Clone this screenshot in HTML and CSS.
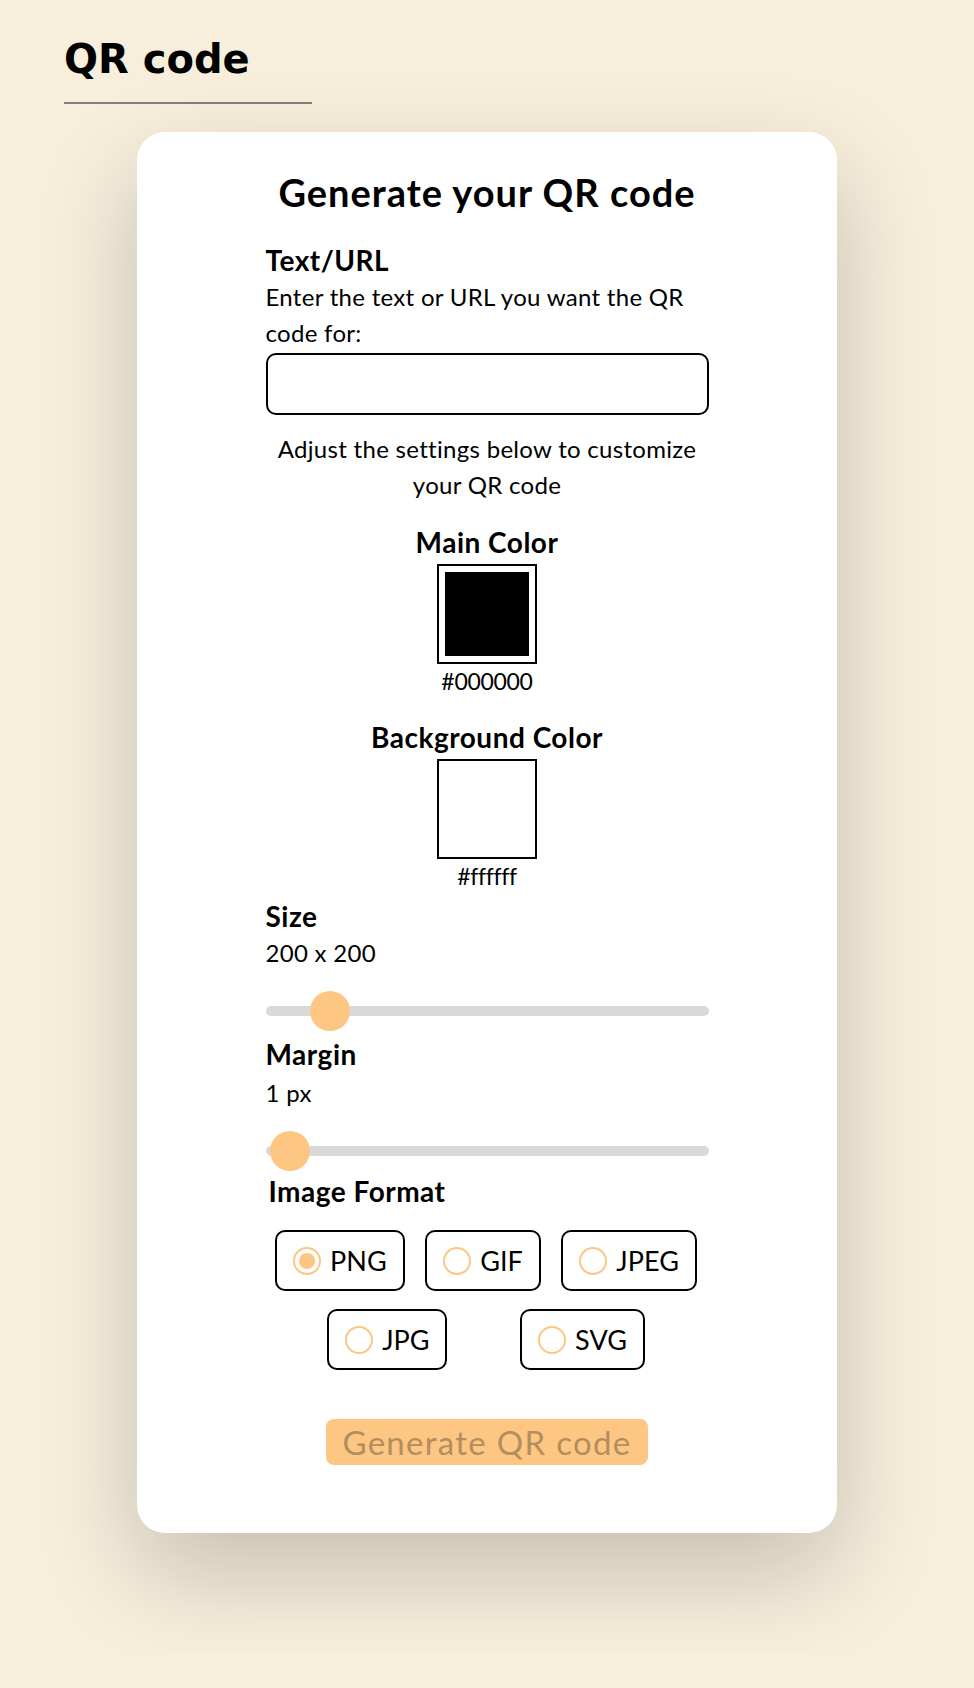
FILE: index.html
```html
<!DOCTYPE html>
<html lang="en">
<head>
  <meta charset="UTF-8">
  <title>QR code</title>
  <link rel="stylesheet" href="styles.css">
</head>
<body>

<h1 class="page-title">QR code</h1>

<main class="card">
  <h2 class="card-title">Generate your QR code</h2>

  <form class="qr-form">
    <label class="field-label" for="qrText">Text/URL</label>
    <p class="hint">Enter the text or URL you want the QR code for:</p>
    <input id="qrText" class="text-input" type="text">

    <p class="hint centered settings-note">Adjust the settings below to customize your QR code</p>

    <div class="color-field">
      <label class="field-label" for="mainColor">Main Color</label>
      <input id="mainColor" class="color-input" type="color" value="#000000">
      <span class="color-value">#000000</span>
    </div>

    <div class="color-field">
      <label class="field-label" for="bgColor">Background Color</label>
      <input id="bgColor" class="color-input" type="color" value="#ffffff">
      <span class="color-value">#ffffff</span>
    </div>

    <label class="field-label" for="size">Size</label>
    <p class="hint">200 x 200</p>
    <input id="size" class="slider" type="range" min="100" max="1000" value="200">

    <label class="field-label" for="margin">Margin</label>
    <p class="hint">1 px</p>
    <input id="margin" class="slider" type="range" min="0" max="100" value="1">

    <div class="field-label format-label">Image Format</div>
    <div class="formats">
      <label class="format"><input type="radio" name="format" value="png" checked> PNG</label>
      <label class="format"><input type="radio" name="format" value="gif"> GIF</label>
      <label class="format"><input type="radio" name="format" value="jpeg"> JPEG</label>
      <label class="format"><input type="radio" name="format" value="jpg"> JPG</label>
      <label class="format"><input type="radio" name="format" value="svg"> SVG</label>
    </div>

    <div class="actions">
      <button class="generate-btn" type="button" disabled>Generate QR code</button>
    </div>
  </form>
</main>

</body>
</html>
```

FILE: styles.css
```css
body { margin: 0; background: #f7eedc; font-family: Lato, "Liberation Sans", sans-serif; color: #000; padding-bottom: 120px; }

.page-title { font-family: "DejaVu Sans", Verdana, sans-serif; font-size: 40px; line-height: 48px; font-weight: bold; margin: 35px 0 0 64px; padding-bottom: 19px; width: 248px; border-bottom: 2px solid #808080; }

.card { width: 700px; box-sizing: border-box; margin: 28px auto 0; padding: 37px 0 68px; background: #fff; border-radius: 28px; box-shadow: 0 40px 100px rgba(0, 0, 0, 0.2); }
.card-title { margin: 0; text-align: center; font-size: 38px; line-height: 46px; font-weight: bold; letter-spacing: 1px; }

.qr-form { width: 443px; margin: 27px auto 0; display: flex; flex-direction: column; }

.field-label { display: block; font-size: 28px; line-height: 36px; font-weight: bold; letter-spacing: 0.5px; }
.hint { margin: 1px 0 0; font-size: 24px; line-height: 36px; letter-spacing: 0.3px; }
.centered { text-align: center; }
.settings-note { margin-top: 16px; }

.text-input { box-sizing: border-box; width: 100%; height: 62px; margin-top: 2px; border: 2px solid #000; border-radius: 10px; font-size: 24px; padding: 0 12px; font-family: inherit; }

.color-field { display: flex; flex-direction: column; align-items: center; margin-top: 21px; }
.color-field + .color-field { margin-top: 23px; }
.color-input { box-sizing: border-box; width: 100px; height: 100px; margin: 4px 0 0; padding: 6px; border: 2px solid #000; border-radius: 0; background: #fff; cursor: pointer; }
.color-input::-webkit-color-swatch-wrapper { padding: 0; }
.color-input::-webkit-color-swatch { border: none; border-radius: 0; }
.color-value { font-size: 23px; line-height: 30px; margin-top: 2px; letter-spacing: -0.3px; }

.color-field + label { margin-top: 7px; }

.slider { -webkit-appearance: none; appearance: none; width: 100%; height: 40px; margin: 20px 0 5px; background: transparent; }
.slider::-webkit-slider-runnable-track { height: 10px; border-radius: 5px; background: #d9d9d9; }
.slider::-webkit-slider-thumb { -webkit-appearance: none; appearance: none; width: 40px; height: 40px; margin-top: -15px; border-radius: 50%; background: #fdc683; border: none; }

.slider + .field-label + .hint { margin-top: 3px; }

.format-label { margin: -3px 0 0 3px; }

.formats { display: flex; flex-wrap: wrap; justify-content: space-evenly; row-gap: 18px; margin: 21px 0 0 -2px; }
.format { display: flex; align-items: center; gap: 9px; box-sizing: border-box; height: 61px; margin: 0 9px; padding: 0 16px; border: 2px solid #000; border-radius: 10px; font-size: 27px; cursor: pointer; }
.format input { -webkit-appearance: none; appearance: none; width: 28px; height: 28px; margin: 0; border: 2px solid #fdc683; border-radius: 50%; background: #fff; }
.format input:checked { background: radial-gradient(circle, #fdc683 0 7.5px, #fff 8.5px); }

.actions { display: flex; justify-content: center; margin-top: 49px; }
.generate-btn { height: 46px; padding: 0 16px; border: none; border-radius: 8px; background: #fdc683; color: #b38e5e; font-family: inherit; font-size: 33px; letter-spacing: 1.3px; }
```
